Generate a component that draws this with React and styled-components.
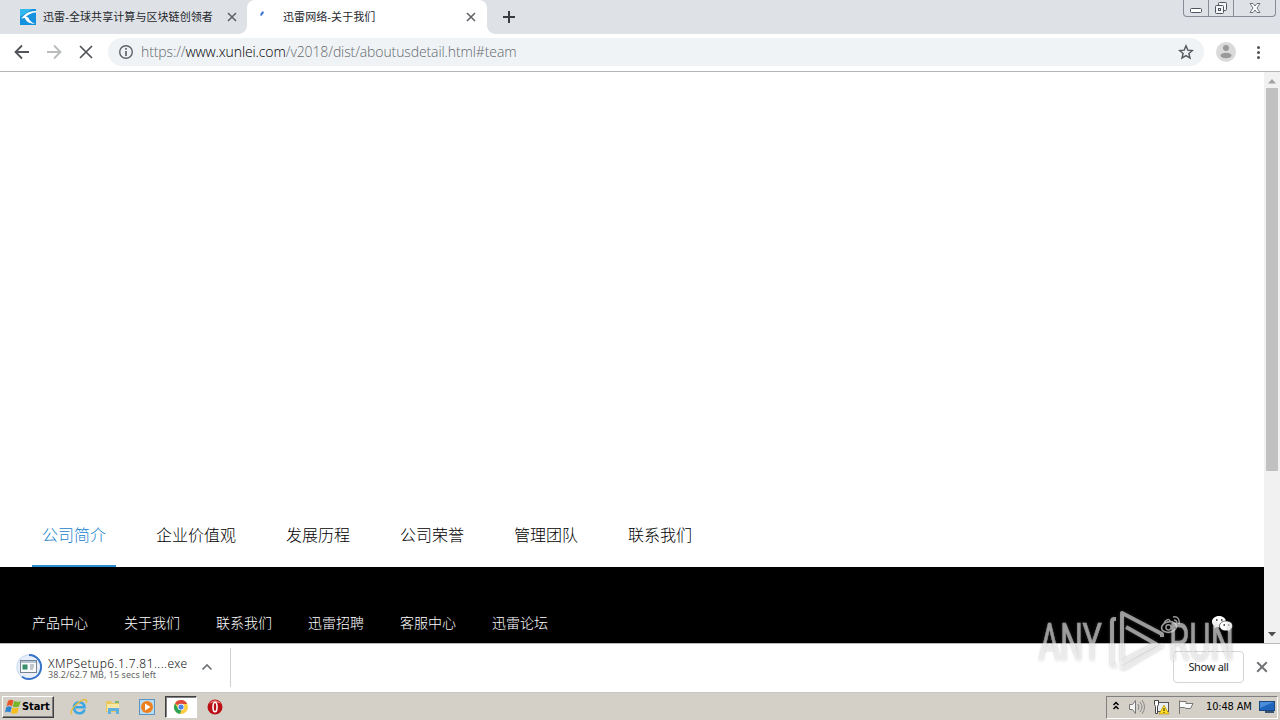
import styled, { createGlobalStyle, css } from 'styled-components';

const GlobalStyle = createGlobalStyle`
  * {
    box-sizing: border-box;
  }

  body {
    margin: 0;
    overflow: hidden;
    background: #fff;
    font-family: 'Noto Sans', 'Noto Sans CJK SC', sans-serif;
  }

  svg {
    display: block;
    flex: none;
  }
`;

const Screen = styled.div`
  position: relative;
  width: 1280px;
  height: 720px;
  overflow: hidden;
  display: flex;
  flex-direction: column;
`;

const TabStrip = styled.div`
  height: 34px;
  flex: none;
  display: flex;
  background: #dee1e6;
`;

const Tab = styled.div`
  position: relative;
  display: flex;
  align-items: center;
  height: 34px;
  width: ${({ $width }) => $width}px;
  padding-left: ${({ $inset }) => $inset}px;
  color: #3c4043;

  ${({ $active }) =>
    $active &&
    css`
      background: #fff;
      border-radius: 8px 8px 0 0;

      &::before,
      &::after {
        content: '';
        position: absolute;
        bottom: 0;
        width: 8px;
        height: 8px;
      }

      &::before {
        left: -8px;
        background: radial-gradient(circle at 0 0, transparent 7.5px, #fff 8px);
      }

      &::after {
        right: -8px;
        background: radial-gradient(circle at 100% 0, transparent 7.5px, #fff 8px);
      }
    `}
`;

const TabTitle = styled.span`
  width: ${({ $width }) => $width}px;
  padding-left: ${({ $active }) => ($active ? 1 : 0)}px;
  margin: 0 0 0 7px;
  font: 11px/16px 'Liberation Sans', 'Noto Sans CJK SC', sans-serif;
  letter-spacing: 0.08px;
  color: #25282c;
  white-space: nowrap;
`;

const NewTab = styled.div`
  margin: 10px 0 0 15px;
`;

const WindowButtons = styled.div`
  display: flex;
  width: 93px;
  height: 17px;
  margin: 0 4px 0 auto;
  border: 1px solid #888c96;
  border-top: 0;
  border-radius: 0 0 4px 4px;
`;

const WindowButton = styled.div`
  display: flex;
  justify-content: center;
  width: ${({ $width }) => $width}px;
  height: 16px;
  border-right: ${({ $last }) => ($last ? 0 : '1px solid #888c96')};
`;

const Toolbar = styled.div`
  display: flex;
  align-items: center;
  height: 38px;
  flex: none;
  padding: 0 12px 1px 13px;
  border-bottom: 1px solid #b3b5b7;
`;

const NavButtons = styled.div`
  display: flex;
  gap: 14px;
  width: 95px;
`;

const AddressBar = styled.div`
  display: flex;
  align-items: center;
  width: 1096px;
  height: 28px;
  flex: none;
  padding: 0 10px;
  border-radius: 14px;
  background: #f0f3f6;
`;

const Url = styled.span`
  flex: 1;
  margin: 0 0 1px 7px;
  font: 300 14px/20px 'Open Sans', 'Noto Sans', sans-serif;
  letter-spacing: -0.11px;
  color: #63696d;
  white-space: nowrap;

  b {
    font-weight: 300;
    color: #000;
  }
`;

const ToolbarEnd = styled.div`
  display: flex;
  align-items: center;
  gap: 14px;
  margin-left: 12px;
`;

const Viewport = styled.div`
  display: flex;
  height: 571px;
  flex: none;
`;

const Page = styled.main`
  display: flex;
  flex-direction: column;
  width: 1264px;
`;

const Hero = styled.div`
  height: 432px;
`;

const SectionNav = styled.nav`
  display: flex;
  gap: 30px;
  height: 63px;
  padding-left: 32px;
`;

const SectionLink = styled.a`
  height: 63px;
  padding: 0 10px;
  border-bottom: 2px solid ${({ $active }) => ($active ? '#2a8fd5' : 'transparent')};
  font: 300 16px/61px 'Noto Sans CJK SC', sans-serif;
  color: ${({ $active }) => ($active ? '#1682cc' : '#000')};
`;

const Footer = styled.footer`
  display: flex;
  align-items: center;
  gap: 36px;
  height: 76px;
  padding: 34px 31px 0 32px;
  background: #000;
`;

const FooterLink = styled.a`
  font: 300 14px/20px 'Noto Sans CJK SC', sans-serif;
  color: #fff;
`;

const SocialLinks = styled.div`
  display: flex;
  gap: 30px;
  margin-left: auto;
  padding-top: 6px;
`;

const Scrollbar = styled.div`
  display: flex;
  flex-direction: column;
  width: 16px;
  padding: 7px 2px 6px;
  background: #f1f1f1;
  align-items: center;
`;

const Thumb = styled.div`
  width: 12px;
  height: 383px;
  margin: 4px 0 auto;
  background: #c1c1c1;
`;

const DownloadBar = styled.div`
  display: flex;
  align-items: center;
  height: 50px;
  flex: none;
  padding: 0 12px 2px 16px;
  border-top: 1px solid #b6b8ba;
  border-bottom: 1px solid #c8c6c2;
  background: #fff;
`;

const DownloadItem = styled.div`
  display: flex;
  align-items: center;
  width: 215px;
  height: 39px;
  border-right: 1px solid #cfcfcf;
`;

const DownloadText = styled.div`
  display: flex;
  flex-direction: column;
  width: 153px;
  margin-left: 6px;
  padding-top: 4px;
  white-space: nowrap;
`;

const FileName = styled.span`
  font: 300 12px/12px 'Noto Sans', sans-serif;
  letter-spacing: 0.45px;
  color: #111;
`;

const FileStatus = styled.span`
  font: 9px/10px 'Noto Sans', sans-serif;
  letter-spacing: 0.05px;
  color: #666;
`;

const ShowAll = styled.button`
  width: 71px;
  height: 32px;
  margin: 0 12px 0 auto;
  padding: 0 0 1px;
  border: 1px solid #d3d5d8;
  border-radius: 4px;
  background: #fff;
  font: 11px/16px 'Noto Sans', sans-serif;
  letter-spacing: -0.3px;
  color: #222;
`;

const Taskbar = styled.div`
  display: flex;
  align-items: center;
  height: 27px;
  flex: none;
  padding: 1px 2px 0;
  background: #d4d0c8;
`;

const StartButton = styled.div`
  display: flex;
  align-items: center;
  gap: 1px;
  width: 52px;
  height: 22px;
  padding-left: 2px;
  border: 1px solid;
  border-color: #fff #404040 #404040 #fff;
  box-shadow: inset -1px -1px #808080;
  font: bold 11px/16px 'DejaVu Sans Condensed', 'DejaVu Sans', sans-serif;
  letter-spacing: -0.1px;
  color: #000;
`;

const QuickLaunch = styled.div`
  display: flex;
  align-items: center;
  padding-left: 8px;
`;

const TaskButton = styled.div`
  display: flex;
  align-items: center;
  justify-content: center;
  width: ${({ $pressed }) => ($pressed ? 32 : 34)}px;
  height: 22px;
  border: 1px solid transparent;

  ${({ $pressed }) =>
    $pressed &&
    css`
      margin: 0 1px;
      border-color: #404040 #fff #fff #404040;
      box-shadow: inset 1px 1px #808080;
      background: #fff;
    `}
`;

const Tray = styled.div`
  display: flex;
  align-items: center;
  width: 172px;
  height: 23px;
  margin-left: auto;
  padding: 0 0 0 5px;
  border: 1px solid;
  border-color: #808080 #fff #fff #808080;
`;

const TrayIcons = styled.div`
  display: flex;
  align-items: center;
  gap: 8px;
  width: 94px;
`;

const Clock = styled.span`
  width: 53px;
  font: 11px/16px 'DejaVu Sans Condensed', 'DejaVu Sans', sans-serif;
  letter-spacing: -0.15px;
  color: #000;
  white-space: nowrap;
`;

const Watermark = styled.svg`
  position: absolute;
  left: 1030px;
  top: 604px;
  filter: drop-shadow(0 0 1.5px rgba(110, 110, 110, 0.75));
  pointer-events: none;
`;

function Cross({ size = 10, color = '#5f6368', stroke = 1.6 }) {
  return (
    <svg width={size} height={size} viewBox='0 0 10 10'>
      <path d='M1 1l8 8M9 1l-8 8' stroke={color} strokeWidth={stroke} />
    </svg>
  );
}

function SiteIcon() {
  return (
    <svg width='16' height='16' viewBox='0 0 16 16'>
      <rect width='16' height='16' fill='#1591dd' />
      <path d='M0 0h12L0 8z' fill='#35b8ee' />
      <path d='M16 2C11 2 7 3.5 4.5 6L1 9.5l4-.5c.5 3 4 5.5 10 6-4-2-6-4-6.5-6.3L6 7.5C9 5 12 3.6 16 3.4z' fill='#fff' />
    </svg>
  );
}

function Arrow({ back }) {
  return (
    <svg width='18' height='18' viewBox='0 0 18 18' fill='none'>
      <path
        d={back ? 'M16 9H3M9 2.5L2.5 9 9 15.5' : 'M2 9h13M9 2.5L15.5 9 9 15.5'}
        stroke={back ? '#505357' : '#b9bbbd'}
        strokeWidth='1.8'
      />
    </svg>
  );
}

function ScrollArrow({ down }) {
  return (
    <svg width='8' height='5' viewBox='0 0 8 5'>
      <path d={down ? 'M0 0h8L4 4.5z' : 'M0 4.5h8L4 0z'} fill={down ? '#505050' : '#a3a3a3'} />
    </svg>
  );
}

function Weibo() {
  return (
    <svg width='22' height='20' viewBox='0 0 22 20' fill='none'>
      <ellipse cx='9' cy='12' rx='7.5' ry='5.2' stroke='#999' strokeWidth='1.7' transform='rotate(-10 9 12)' />
      <circle cx='8.5' cy='12.3' r='2.6' stroke='#999' strokeWidth='1.5' />
      <path d='M4 8c2-3 5-5 6-2M13 2c5-1 7 3 6 7M14 5c2 0 3 1 2.5 3' stroke='#999' strokeWidth='1.5' />
    </svg>
  );
}

function Wechat() {
  return (
    <svg width='21' height='18' viewBox='0 0 21 18'>
      <path d='M7 1C3 1 0 3.5 0 6.7c0 2 1 3.3 2.5 4.3L2 13.2l3-1.3c5 1 9-1.3 9-5.2C14 3.5 11 1 7 1z' fill='#fff' />
      <path
        d='M14 6c-3.8 0-6.5 2.2-6.5 5s3.3 5.5 8 4.7L18 17l-.5-2c2-1 3-2.3 3-4 0-2.8-2.7-5-6.5-5z'
        fill='#fff'
        stroke='#111'
        strokeWidth='.6'
      />
      <path d='M4 5h1.5M9 5h1.5M11.5 10H13M16 10h1.5' stroke='#222' strokeWidth='1.6' />
    </svg>
  );
}

function InstallerIcon() {
  return (
    <svg width='26' height='28' viewBox='0 0 26 28' fill='none'>
      <circle cx='13' cy='14' r='12' fill='#e6effa' stroke='#d4e1f4' strokeWidth='1.5' />
      <path d='M13 2a12 12 0 1 1-7 21.7' stroke='#3674c9' strokeWidth='2' />
      <rect x='4.5' y='7.5' width='16' height='12' fill='#fafafa' stroke='#778491' />
      <path d='M5 9h15' stroke='#b4c5d5' strokeWidth='2' />
      <rect x='6.5' y='11.5' width='5' height='5' fill='#39906d' />
      <path d='M14 12h4M14 14h4M14 16h3' stroke='#89959b' />
    </svg>
  );
}

function WindowsFlag() {
  return (
    <svg width='16' height='16' viewBox='0 0 16 16'>
      <path d='M3 2c2-2 4-1.5 5.5-.5L7 7.2c-2-1.2-3.5-1-5.5 0z' fill='#e75829' />
      <path d='M9.2 2c2 1 4 1.2 6.5 0L14 7.6c-2 1-4 1-6.3 0z' fill='#77b52a' />
      <path d='M1.3 8c2-1 3.5-1 5.5 0l-1.5 5.6c-2-1-3.5-1-5.3 0z' fill='#2f85d0' />
      <path d='M7.5 8.4c2 1 4.2 1 6.3 0L12.3 14c-2 1-4.2 1-6.3 0z' fill='#f6bd1d' />
    </svg>
  );
}

function ExplorerIcon() {
  return (
    <svg width='18' height='18' viewBox='0 0 18 18' fill='none'>
      <path d='M14.5 11.5C13 17 4 16.5 4 9.5S14.5 2.5 14.5 9.3H5' stroke='#3ca7e2' strokeWidth='2.6' />
      <path d='M2 16C-2 13 11 0 16 2c1 .5.7 2 0 3' stroke='#e8bd39' strokeWidth='1.4' />
    </svg>
  );
}

function FolderIcon() {
  return (
    <svg width='16' height='16' viewBox='0 0 16 16'>
      <path d='M1 2h5l1 2h7v9H1z' fill='#e9c760' />
      <path d='M2 5h12v7H2z' fill='#f7e7a2' />
      <path d='M3 15V9h11v6h-3v-3H6v3z' fill='#60b0df' />
      <path d='M10 2h4v2h-4z' fill='#76ba79' />
    </svg>
  );
}

function PlayerIcon() {
  return (
    <svg width='16' height='16' viewBox='0 0 16 16'>
      <rect x='.5' y='.5' width='15' height='15' fill='#b9daf1' stroke='#5995c4' />
      <circle cx='8' cy='8' r='6' fill='#ed8120' />
      <path d='M6 4.5L11.5 8 6 11.5z' fill='#fff' />
    </svg>
  );
}

function ChromeIcon() {
  return (
    <svg width='14' height='14' viewBox='0 0 14 14'>
      <circle cx='7' cy='7' r='7' fill='#ffcd42' />
      <path d='M7 7L1 3.4A7 7 0 0 1 13.2 4H7z' fill='#de493d' />
      <path d='M1 3.4L4.4 9l3 1.1L6 14A7 7 0 0 1 1 3.4z' fill='#2ca354' />
      <circle cx='7' cy='7' r='3.3' fill='#fff' />
      <circle cx='7' cy='7' r='2.6' fill='#4a83e9' />
    </svg>
  );
}

function OperaIcon() {
  return (
    <svg width='16' height='16' viewBox='0 0 16 16'>
      <circle cx='8' cy='8' r='7.5' fill='#b91116' />
      <path d='M2 5c2-5 10-5 12 0-3-2-9-2-12 0z' fill='#e36b65' />
      <ellipse cx='8' cy='8' rx='2' ry='4.8' fill='#b91116' stroke='#fff' strokeWidth='1.6' />
    </svg>
  );
}

function TrayStatus() {
  return (
    <TrayIcons>
      <svg width='8' height='14' viewBox='0 0 8 14' fill='none'>
        <path d='M1.5 5L4 2.5 6.5 5M1.5 9L4 6.5 6.5 9' stroke='#000' strokeWidth='1.5' />
      </svg>
      <svg width='17' height='16' viewBox='0 0 17 16' fill='none'>
        <path d='M1.5 5.5h3l3-4v13l-3-4h-3z' fill='#f5f5f5' stroke='#777' />
        <path d='M10 5q2 3 0 6M12 3q4 5 0 10M14 1q5 7 0 14' stroke='#888' />
      </svg>
      <svg width='17' height='16' viewBox='0 0 17 16' fill='none'>
        <rect x='4.5' y='3.5' width='11' height='9' fill='#e8eef4' stroke='#555' />
        <path d='M1.5 1.5h4v4l-1 2v7h-2v-7l-1-2z' fill='#fff' stroke='#444' />
        <path d='M11 6l5 9H6z' fill='#ffdc22' stroke='#aa8500' strokeWidth='.6' />
        <path d='M11 9v3M11 13v1' stroke='#222' />
      </svg>
      <svg width='17' height='16' viewBox='0 0 17 16' fill='none'>
        <path d='M1.5 15V1.5M2 2.5h6v2h7l-2.5 5H8L6.5 8.5H2' fill='#fafafa' stroke='#777' />
      </svg>
    </TrayIcons>
  );
}

const sections = ['公司简介', '企业价值观', '发展历程', '公司荣誉', '管理团队', '联系我们'];
const footerLinks = ['产品中心', '关于我们', '联系我们', '迅雷招聘', '客服中心', '迅雷论坛'];

export default function App() {
  return (
    <Screen>
      <GlobalStyle />
      <TabStrip>
        <Tab $width={247} $inset={20}>
          <SiteIcon />
          <TabTitle $width={184}>迅雷-全球共享计算与区块链创领者</TabTitle>
          <Cross />
        </Tab>
        <Tab $active $width={240} $inset={12}>
          <svg width='16' height='16' viewBox='0 0 16 16'>
            <path d='M2 6.5Q2.5 4 4.5 3' stroke='#396fd6' strokeWidth='2' fill='none' />
          </svg>
          <TabTitle $active $width={184}>
            迅雷网络-关于我们
          </TabTitle>
          <Cross />
        </Tab>
        <NewTab>
          <svg width='14' height='14' viewBox='0 0 14 14'>
            <path d='M1 7h12M7 1v12' stroke='#383b40' strokeWidth='2' />
          </svg>
        </NewTab>
        <WindowButtons>
          <WindowButton $width={25}>
            <svg width='14' height='16' viewBox='0 0 14 16'>
              <rect x='1.5' y='8.5' width='11' height='4' rx='1' fill='#fff' stroke='#50545c' />
            </svg>
          </WindowButton>
          <WindowButton $width={25}>
            <svg width='14' height='16' viewBox='0 0 14 16' fill='#f5f6f8' stroke='#50545c'>
              <rect x='4.5' y='2.5' width='8' height='8' rx='1' />
              <rect x='1.5' y='5.5' width='8' height='8' rx='1' />
              <rect x='4.5' y='8.5' width='2' height='2' />
            </svg>
          </WindowButton>
          <WindowButton $width={41} $last>
            <svg width='12' height='16' viewBox='0 0 12 16'>
              <path
                d='M1 3.5h3l2 2.5 2-2.5h3L8 8l3 4.5H8L6 10l-2 2.5H1L4 8z'
                fill='#fff'
                stroke='#62666e'
                strokeWidth='.9'
              />
            </svg>
          </WindowButton>
        </WindowButtons>
      </TabStrip>
      <Toolbar>
        <NavButtons>
          <Arrow back />
          <Arrow />
          <svg width='18' height='18' viewBox='0 0 18 18'>
            <path d='M3 3l12 12M15 3L3 15' stroke='#505357' strokeWidth='1.7' />
          </svg>
        </NavButtons>
        <AddressBar>
          <svg width='16' height='16' viewBox='0 0 16 16' fill='none'>
            <circle cx='8' cy='8' r='6.3' stroke='#5f6368' strokeWidth='1.4' />
            <path d='M8 4v1.7M8 7v5' stroke='#5f6368' strokeWidth='1.7' />
          </svg>
          <Url>
            https://<b>www.xunlei.com</b>/v2018/dist/aboutusdetail.html#team
          </Url>
          <svg width='16' height='16' viewBox='0 0 16 16' fill='none'>
            <path
              d='M8 1.8l1.8 4.3 4.6.4-3.5 3 1.1 4.6-4-2.5-4 2.5 1.1-4.6-3.5-3 4.6-.4z'
              stroke='#53565a'
              strokeWidth='1.4'
            />
          </svg>
        </AddressBar>
        <ToolbarEnd>
          <svg width='20' height='20' viewBox='0 0 20 20'>
            <circle cx='10' cy='10' r='10' fill='#dadada' />
            <circle cx='10' cy='6' r='3' fill='#999' />
            <ellipse cx='10' cy='13.5' rx='5.5' ry='2.8' fill='#999' />
          </svg>
          <svg width='18' height='16' viewBox='0 0 18 16' fill='#505357'>
            <circle cx='8.5' cy='3.5' r='1.5' />
            <circle cx='8.5' cy='8.5' r='1.5' />
            <circle cx='8.5' cy='13.5' r='1.5' />
          </svg>
        </ToolbarEnd>
      </Toolbar>
      <Viewport>
        <Page>
          <Hero />
          <SectionNav>
            {sections.map((name, i) => (
              <SectionLink key={name} $active={i === 0}>
                {name}
              </SectionLink>
            ))}
          </SectionNav>
          <Footer>
            {footerLinks.map((name) => (
              <FooterLink key={name}>{name}</FooterLink>
            ))}
            <SocialLinks>
              <Weibo />
              <Wechat />
            </SocialLinks>
          </Footer>
        </Page>
        <Scrollbar>
          <ScrollArrow />
          <Thumb />
          <ScrollArrow down />
        </Scrollbar>
      </Viewport>
      <DownloadBar>
        <DownloadItem>
          <InstallerIcon />
          <DownloadText>
            <FileName>XMPSetup6.1.7.81....exe</FileName>
            <FileStatus>38.2/62.7 MB, 15 secs left</FileStatus>
          </DownloadText>
          <svg width='12' height='8' viewBox='0 0 12 8' fill='none'>
            <path d='M1.5 6.5L6 2l4.5 4.5' stroke='#707478' strokeWidth='1.7' />
          </svg>
        </DownloadItem>
        <ShowAll>Show all</ShowAll>
        <Cross size={12} color='#707275' />
      </DownloadBar>
      <Taskbar>
        <StartButton>
          <WindowsFlag />
          Start
        </StartButton>
        <QuickLaunch>
          <TaskButton>
            <ExplorerIcon />
          </TaskButton>
          <TaskButton>
            <FolderIcon />
          </TaskButton>
          <TaskButton>
            <PlayerIcon />
          </TaskButton>
          <TaskButton $pressed>
            <ChromeIcon />
          </TaskButton>
          <TaskButton>
            <OperaIcon />
          </TaskButton>
        </QuickLaunch>
        <Tray>
          <TrayStatus />
          <Clock>10:48 AM</Clock>
          <svg width='16' height='14' viewBox='0 0 16 14'>
            <rect x='.5' y='1.5' width='15' height='9' fill='#1e65bd' stroke='#174681' />
            <path d='M1 2h14L1 8z' fill='#498cda' />
            <path d='M6 12h9' stroke='#39546f' strokeWidth='2' />
          </svg>
        </Tray>
      </Taskbar>
      <Watermark width='208' height='74' viewBox='0 0 208 74' fill='none'>
        <g
          opacity='.55'
          fill='#fff'
          stroke='#fff'
          strokeWidth='.7'
          fontFamily='Roboto, sans-serif'
          fontSize='52'
        >
          <text x='9' y='56' textLength='63' lengthAdjust='spacingAndGlyphs'>
            ANY
          </text>
          <text x='139' y='56' textLength='65' lengthAdjust='spacingAndGlyphs'>
            RUN
          </text>
        </g>
        <g opacity='.55' stroke='#fff' strokeWidth='4' strokeLinejoin='round'>
          <path d='M86 15h-2q-2 0-2 3v41q0 3 4 3' />
          <path d='M132 33V30L92 9v49l34-18-30-17' />
          <path d='M133 41L96 63q-4 3-4-1' />
        </g>
      </Watermark>
    </Screen>
  );
}
